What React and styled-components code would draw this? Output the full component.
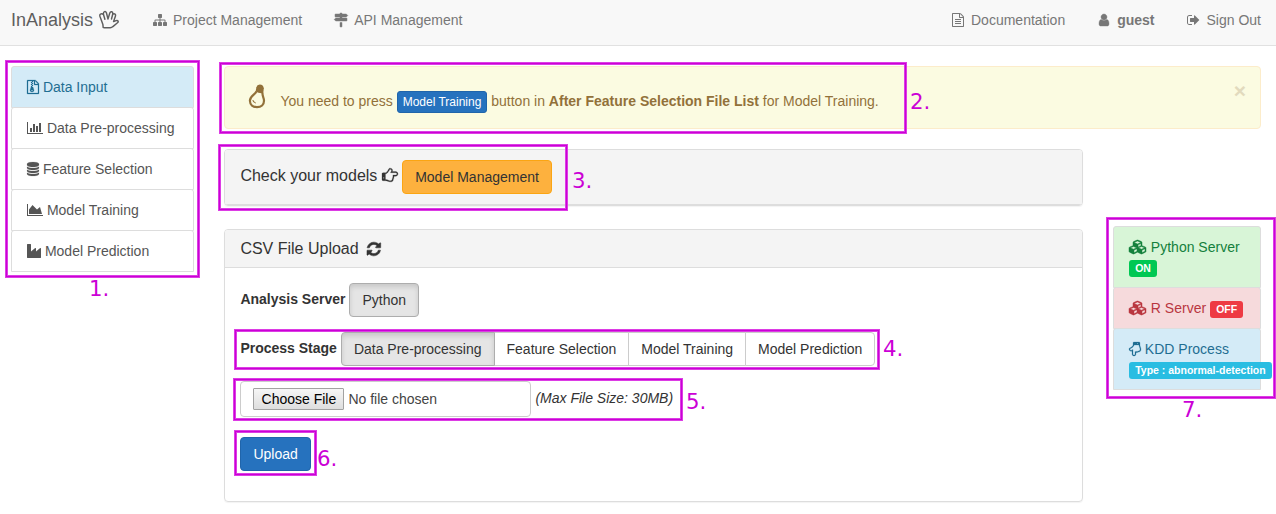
import React from "react";
import styled, { createGlobalStyle, css } from "styled-components";

const GlobalStyle = createGlobalStyle`
  * { box-sizing: border-box; }
  body {
    margin: 0;
    background: #fff;
    color: #333;
    font: 14px/20px "Liberation Sans", Arial, sans-serif;
    overflow: hidden;
  }
  b { font-weight: 700; }
`;

/* ---------- icons ---------- */

const FILE_FRAME =
  "M1468 380q28 28 48 76t20 88v1152q0 40-28 68t-68 28h-1344q-40 0-68-28t-28-68v-1600q0-40 28-68t68-28h896q40 0 88 20t76 48zm-444-244v376h376q-10-29-22-41l-313-313q-12-12-41-22zm384 1528v-1024h-416q-40 0-68-28t-28-68v-416";
const HAND =
  "M256 1216q0-26-19-45t-45-19-45 19-19 45 19 45 45 19 45-19 19-45zM1664 768q0-51-39-89.5t-89-38.5h-576q0-20 15-48.5t33-55 33-68 15-84.5q0-67-44.5-97.5t-115.5-30.5q-24 0-90 139-24 44-37 65-40 64-112 145-71 81-101 106-69 57-140 57h-32v640h32q72 0 167 32t193.5 64 179.5 32q189 0 189-167 0-26-5-56 30-16 47.5-52.5t17.5-73.5-18-69q53-50 53-119 0-25-10-55.5t-25-47.5h331q52 0 90-38t38-90zm128-1q0 105-75.5 181t-180.5 76h-169q-4 62-37 119 3 21 3 43 0 101-60 178 1 139-85 219.5t-227 80.5q-133 0-322-69-164-59-223-59h-288q-53 0-90.5-37.5t-37.5-90.5v-640q0-53 37.5-90.5t90.5-37.5h288q10 0 21.5-4.5t23.5-14 22.5-18 24-22.5 20.5-21.5 19-21.5 14-17q65-74 100-129 13-21 33-62t37-72 40.5-63 55-49.5 69.5-17.5q125 0 206.5 67t81.5 189q0 68-22 128h374q104 0 180 76t76 179z";

const ICONS = {
  sitemap: {
    w: 1792,
    d: "M1792 1248v320q0 40-28 68t-68 28h-320q-40 0-68-28t-28-68v-320q0-40 28-68t68-28h96v-192h-512v192h96q40 0 68 28t28 68v320q0 40-28 68t-68 28h-320q-40 0-68-28t-28-68v-320q0-40 28-68t68-28h96v-192h-512v192h96q40 0 68 28t28 68v320q0 40-28 68t-68 28h-320q-40 0-68-28t-28-68v-320q0-40 28-68t68-28h96v-192q0-52 38-90t90-38h512v-192h-96q-40 0-68-28t-28-68v-320q0-40 28-68t68-28h320q40 0 68 28t28 68v320q0 40-28 68t-68 28h-96v192h512q52 0 90 38t38 90v192h96q40 0 68 28t28 68z",
  },
  signs: {
    w: 1792,
    d: "M1745 297q10 10 10 23t-10 23l-141 141q-28 28-68 28h-1344q-26 0-45-19t-19-45v-256q0-26 19-45t45-19h576v-64q0-26 19-45t45-19h128q26 0 45 19t19 45v64h512q40 0 68 28zm-977 919h256v512q0 26-19 45t-45 19h-128q-26 0-45-19t-19-45v-512zm832-576q26 0 45 19t19 45v256q0 26-19 45t-45 19h-1344q-40 0-68-28l-141-141q-10-10-10-23t10-23l141-141q28-28 68-28h512v-192h256v192h576z",
    weight: 60,
  },
  fileText: {
    w: 1536,
    d:
      FILE_FRAME +
      "h-768v1536h1280zm-1024-864q0-14 9-23t23-9h704q14 0 23 9t9 23v64q0 14-9 23t-23 9h-704q-14 0-23-9t-9-23v-64zm736 224q14 0 23 9t9 23v64q0 14-9 23t-23 9h-704q-14 0-23-9t-9-23v-64q0-14 9-23t23-9h704zm0 256q14 0 23 9t9 23v64q0 14-9 23t-23 9h-704q-14 0-23-9t-9-23v-64q0-14 9-23t23-9h704z",
  },
  fileZip: {
    w: 1536,
    d:
      "M640 384v-128h-128v128h128zm128 128v-128h-128v128h128zm-128 128v-128h-128v128h128zm128 128v-128h-128v128h128z" +
      FILE_FRAME +
      "h-128v128h-128v-128h-512v1536h1280zm-627-721l107 349q8 27 8 52 0 83-72.5 137.5t-183.5 54.5-183.5-54.5-72.5-137.5q0-25 8-52 21-63 120-396v-128h128v128h79q22 0 39 13t23 34zm-141 465q53 0 90.5-19t37.5-45-37.5-45-90.5-19-90.5 19-37.5 45 37.5 45 90.5 19z",
    weight: 30,
  },
  user: {
    x: 256,
    w: 1280,
    d: "M1536 1399q0 109-62.5 187t-150.5 78h-854q-88 0-150.5-78t-62.5-187q0-85 8.5-160.5t31.5-152 58.5-131 94-89 134.5-34.5q131 128 313 128t313-128q76 0 134.5 34.5t94 89 58.5 131 31.5 152 8.5 160.5zm-256-887q0 159-112.5 271.5t-271.5 112.5-271.5-112.5-112.5-271.5 112.5-271.5 271.5-112.5 271.5 112.5 112.5 271.5z",
    weight: 50,
  },
  signOut: {
    x: 64,
    w: 1664,
    d: "M704 1440q0 4 1 20t.5 26.5-3 23.5-10 19.5-20.5 6.5h-320q-119 0-203.5-84.5t-84.5-203.5v-704q0-119 84.5-203.5t203.5-84.5h320q13 0 22.5 9.5t9.5 22.5q0 4 1 20t.5 26.5-3 23.5-10 19.5-20.5 6.5h-320q-66 0-113 47t-47 113v704q0 66 47 113t113 47h312l11.5 1 11.5 3 8 5.5 7 9 2 13.5zm928-544q0 26-19 45l-544 544q-19 19-45 19t-45-19-19-45v-288h-448q-26 0-45-19t-19-45v-384q0-26 19-45t45-19h448v-288q0-26 19-45t45-19 45 19l544 544q19 19 19 45z",
  },
  barChart: {
    w: 2048,
    d: "M640 896v512h-256v-512h256zm384-512v1024h-256v-1024h256zm1024 1152v128h-2048v-1536h128v1408h1920zm-640-896v768h-256v-768h256zm384-384v1152h-256v-1152h256z",
  },
  database: {
    x: 128,
    w: 1536,
    d: "M896 768q237 0 443-43t325-127v170q0 69-103 128t-280 93.5-385 34.5-385-34.5-280-93.5-103-128v-170q119 84 325 127t443 43zm0 768q237 0 443-43t325-127v170q0 69-103 128t-280 93.5-385 34.5-385-34.5-280-93.5-103-128v-170q119 84 325 127t443 43zm0-384q237 0 443-43t325-127v170q0 69-103 128t-280 93.5-385 34.5-385-34.5-280-93.5-103-128v-170q119 84 325 127t443 43zm0-1152q208 0 385 34.5t280 93.5 103 128v128q0 69-103 128t-280 93.5-385 34.5-385-34.5-280-93.5-103-128v-128q0-69 103-128t280-93.5 385-34.5z",
    weight: 20,
  },
  areaChart: {
    w: 2048,
    d: "M2048 1536v128h-2048v-1536h128v1408h1920zm-384-1024l256 896h-1664v-576l448-576 576 576z",
  },
  industry: {
    w: 1792,
    d: "M448 0q26 0 45 19t19 45v891l536-429q17-14 40-14 26 0 45 19t19 45v379l536-429q17-14 40-14 26 0 45 19t19 45v1152q0 26-19 45t-45 19h-1664q-26 0-45-19t-19-45v-1664q0-26 19-45t45-19h384z",
  },
  refresh: {
    x: 128,
    w: 1536,
    d: "M1639 1056q0 5-1 7-64 268-268 434.5t-478 166.5q-146 0-282.5-55t-243.5-157l-129 129q-19 19-45 19t-45-19-19-45v-448q0-26 19-45t45-19h448q26 0 45 19t19 45-19 45l-137 137q71 66 161 102t187 36q134 0 250-65t186-179q11-17 53-117 8-23 30-23h192q13 0 22.5 9.5t9.5 22.5zm25-800v448q0 26-19 45t-45 19h-448q-26 0-45-19t-19-45 19-45l138-138q-148-137-349-137-134 0-250 65t-186 179q-11 17-53 117-8 23-30 23h-199q-13 0-22.5-9.5t-9.5-22.5v-7q65-268 270-434.5t480-166.5q146 0 284 55.5t245 156.5l130-129q19-19 45-19t45 19 19 45z",
    weight: 60,
  },
  cubes: {
    w: 2304,
    d: "M640 1632l384-192v-314l-384 164v342zm-64-454l404-173-404-173-404 173zm1088 454l384-192v-314l-384 164v342zm-64-454l404-173-404-173-404 173zm-448-293l384-165v-266l-384 164v267zm-64-379l441-189-441-189-441 189zm1088 518v416q0 36-19 67t-52 47l-448 224q-25 14-57 14t-57-14l-448-224q-4-2-7-4-2 2-7 4l-448 224q-25 14-57 14t-57-14l-448-224q-33-16-52-47t-19-67v-416q0-38 21.5-70t56.5-48l434-186v-400q0-38 21.5-70t56.5-48l448-192q23-10 50-10t50 10l448 192q35 16 56.5 48t21.5 70v400l434 186q36 16 57 48t21 70z",
    weight: 60,
  },
  handRight: { w: 1792, d: HAND, weight: 30 },
  handDown: { x: 128, w: 1536, d: HAND, transform: "matrix(0 1 1 0 0 0)", weight: 30 },
};

const Glyph = styled.svg`
  height: 1em;
  vertical-align: -0.143em;
  fill: currentColor;
  stroke: currentColor;
  overflow: visible;
`;

const Icon = ({ name }) => {
  const { x = 0, w, d, transform, weight = 0 } = ICONS[name];
  return (
    <Glyph viewBox={`${x} 0 ${w} 1792`} width={`${w / 1792}em`} aria-hidden="true">
      <path d={d} transform={transform} strokeWidth={weight} />
    </Glyph>
  );
};

const SpockSvg = styled.svg`
  flex: none;
  width: 20px;
  height: 20px;
  margin-left: 6px;
  fill: none;
  stroke: currentColor;
  stroke-width: 1.45;
  stroke-linejoin: round;
  stroke-linecap: round;
`;

const SpockHand = () => (
  <SpockSvg viewBox="0 0 20 20">
    <path d="M4.2 17.6L3.9 14.6L1 6.6C.2 4.2 2 3.2 4.4 4.3C4.2 1.2 6.6.7 7.4 2.8L9 9L10.8 3C11.6.9 14.2 1.4 13.7 4.2C15.7 3.2 17 4.4 16.4 6.2L14.6 11.6L17 10.6C19.1 9.9 20 11.8 18.2 13L13.9 16.6C13.1 17.4 12.3 17.8 11.2 17.8H5.4Q4.4 17.8 4.2 17.6Z" />
    <path d="M4.4 4.3L5.9 9.2M13.7 4.2L12.5 9" />
  </SpockSvg>
);

const BulbSvg = styled.svg`
  flex: none;
  width: 20px;
  height: 26px;
  margin-right: 13px;
`;

const Bulb = () => (
  <BulbSvg viewBox="0 0 20 26">
    <path d="M9.4 3.2Q9.9 .6 12.8 .5Q16.4 .8 16.8 4.2L16.3 9Q12.4 9.8 8.6 7.4Z" fill="#92713a" />
    <path
      d="M9.4 7.4C8.4 10.6 2.9 11.4 2.9 16.8C3 20.9 6.2 23.2 10 23.2C14.2 23.2 17 20.6 17 16.8C17 13.4 15.1 12.2 15.5 8.6"
      fill="none"
      stroke="#92713a"
      strokeWidth="2.2"
    />
    <path d="M5.8 16.2Q6.3 18.4 8.8 19" fill="none" stroke="#92713a" strokeWidth="1.1" />
  </BulbSvg>
);

/* ---------- navigation bar ---------- */

const Navbar = styled.nav`
  display: flex;
  align-items: center;
  height: 46px;
  padding: 0 15px 5px 11px;
  background: #f8f8f8;
  border-bottom: 1px solid #e1e1e1;
  color: #777;
`;

const Brand = styled.a`
  display: flex;
  align-items: center;
  width: 140px;
  font-size: 18px;
  color: #5e5e5e;
`;

const NavGroup = styled.div`
  display: flex;
  gap: 30px;
  ${(p) => p.$end && css`margin-left: auto;`}
`;

const NavLink = styled.a`
  display: flex;
  gap: 4px;
  white-space: nowrap;
  font-weight: ${(p) => (p.$bold ? 700 : 400)};
`;

const NavIcon = styled.span`
  width: 18px;
  text-align: center;
`;

/* ---------- page structure ---------- */

const Page = styled.div`
  position: relative;
  width: 1276px;
  height: 514px;
  overflow: hidden;
`;

const Content = styled.div`
  display: flex;
  gap: 30.4px;
  padding: 20px 15px 0 11px;
`;

const Main = styled.main`
  width: 1036.6px;
`;

const Columns = styled.div`
  display: flex;
  align-items: flex-start;
  gap: 29.6px;
`;

const PanelColumn = styled.div`
  width: 859px;
`;

/* ---------- side lists ---------- */

const List = styled.div`
  flex: none;
  width: ${(p) => p.$width}px;
  margin-top: ${(p) => p.$offset || 0}px;
`;

const tones = {
  plain: css`background: #fff; color: #555;`,
  info: css`background: #d4ebf7; color: #1f6e92;`,
  success: css`background: #d8f5d7; color: #14803c;`,
  danger: css`background: #f6dadc; color: #b9363f;`,
};

const ListItem = styled.div`
  padding: 10px 15px;
  margin-bottom: -1px;
  border: 1px solid #ddd;
  border-radius: 3px 3px 0 0;
  white-space: nowrap;
  ${(p) => tones[p.$tone || "plain"]}
`;

const StatusLine = styled.div`
  height: 20px;
`;

const Badge = styled.span`
  display: inline-block;
  height: 17px;
  margin-top: 3px;
  padding: 0 6.2px;
  border-radius: 3px;
  background: ${(p) => p.$color};
  color: #fff;
  font-size: 10.5px;
  font-weight: 700;
  line-height: 17px;
  vertical-align: top;
`;

/* ---------- alert ---------- */

const Alert = styled.div`
  display: flex;
  align-items: flex-start;
  height: 63px;
  margin-bottom: 20px;
  padding: 17px 15px 0 22px;
  background: #fbfbe1;
  border: 1px solid #fcecca;
  border-radius: 4px;
  color: #92713a;
`;

const AlertText = styled.div`
  padding-top: 7px;
  white-space: nowrap;
`;

const CloseMark = styled.span`
  margin: -3px -1px 0 auto;
  font-size: 21px;
  font-weight: 700;
  color: #e2dabd;
`;

/* ---------- buttons ---------- */

const Button = styled.button`
  height: 34px;
  padding: 0 12px;
  border: 1px solid #ccc;
  border-radius: 4px;
  background: #fff;
  color: #333;
  font: inherit;
  white-space: nowrap;
  ${(p) => p.$active && css`
    background: #e5e5e5;
    border-color: #adadad;
    box-shadow: inset 0 3px 5px rgba(0, 0, 0, 0.125);
  `}
  ${(p) => p.$primary && css`
    background: #2672be;
    border-color: #2065ab;
    color: #fff;
  `}
  ${(p) => p.$warning && css`
    background: #fdb13e;
    border-color: #fba512;
  `}
  ${(p) => p.$small && css`
    height: 22px;
    padding: 0 5px;
    border-radius: 3px;
    font-size: 12px;
    line-height: 18px;
    vertical-align: 0;
  `}
`;

const ButtonGroup = styled.div`
  display: flex;
  ${Button} {
    border-radius: 0;
    margin-left: -1px;
  }
  ${Button}:first-child {
    margin-left: 0;
    border-radius: 4px 0 0 4px;
    position: relative;
  }
  ${Button}:last-child {
    border-radius: 0 4px 4px 0;
  }
`;

/* ---------- panels ---------- */

const Panel = styled.section`
  height: ${(p) => p.$height}px;
  margin-bottom: 23px;
  border: 1px solid #ddd;
  border-radius: 4px;
  box-shadow: 0 1px 1px rgba(0, 0, 0, 0.05);
  overflow: hidden;
`;

const PanelHeading = styled.header`
  display: flex;
  align-items: center;
  gap: ${(p) => p.$gap}px;
  height: ${(p) => p.$height}px;
  padding: 0 15px;
  background: #f4f4f4;
  border-bottom: 1px solid #ddd;
  font-size: 16px;
  ${Button} { font-size: 14px; }
`;

const HeadingLabel = styled.span`
  padding-bottom: ${(p) => p.$lift || 0}px;
`;

const PanelBody = styled.div`
  padding: 15px;
`;

const FormRow = styled.div`
  display: flex;
  align-items: center;
  gap: 4px;
  height: ${(p) => p.$height || 34}px;
  margin-bottom: ${(p) => p.$after || 0}px;
`;

const Label = styled.label`
  padding-bottom: 2px;
  font-weight: 700;
`;

const FileField = styled.div`
  display: flex;
  align-items: center;
  gap: 4px;
  width: 291px;
  height: 36px;
  padding-left: 12px;
  border: 1px solid #ccc;
  border-radius: 4px;
  color: #444;
`;

const ChooseButton = styled.button`
  width: 91px;
  height: 22px;
  padding: 0;
  border: 1px solid #a2a2a2;
  border-radius: 1px;
  background: linear-gradient(#f6f6f6, #dedede);
  color: #000;
  font: inherit;
`;

const Hint = styled.em`
  padding-bottom: 2px;
`;

/* ---------- callouts drawn over the page ---------- */

const Frame = styled.div`
  position: absolute;
  left: ${(p) => p.$x + 1}px;
  top: ${(p) => p.$y + 1}px;
  width: ${(p) => p.$w - 2}px;
  height: ${(p) => p.$h - 2}px;
  border: 1px solid #cb00d6;
  box-shadow: 0 0 0 1px #dc3de4, inset 0 0 0 1px #dc3de4;
`;

const Marker = styled.span`
  position: absolute;
  left: ${(p) => p.$x}px;
  top: ${(p) => p.$y}px;
  color: #cb00d6;
  font: 21.3px/24px "DejaVu Sans", sans-serif;
`;

const CALLOUTS = [
  { box: [5, 60, 195, 218], mark: [89, 277] },
  { box: [219, 62, 688, 72], mark: [910, 90] },
  { box: [218, 144, 350, 67], mark: [572, 169] },
  { box: [234, 329, 646, 41], mark: [883, 337] },
  { box: [233, 378, 450, 43], mark: [686, 390] },
  { box: [234, 430, 83, 46], mark: [317, 447] },
  { box: [1106, 217, 170, 182], mark: [1182, 398] },
];

const STEPS = [
  ["fileZip", "Data Input"],
  ["barChart", "Data Pre-processing"],
  ["database", "Feature Selection"],
  ["areaChart", "Model Training"],
  ["industry", "Model Prediction"],
];

const NavEntry = ({ icon, bold, children }) => (
  <NavLink $bold={bold}>
    <NavIcon><Icon name={icon} /></NavIcon>
    {children}
  </NavLink>
);

export default function App() {
  return (
    <Page>
      <GlobalStyle />
      <Navbar>
        <Brand>InAnalysis<SpockHand /></Brand>
        <NavGroup>
          <NavEntry icon="sitemap">Project Management</NavEntry>
          <NavEntry icon="signs">API Management</NavEntry>
        </NavGroup>
        <NavGroup $end>
          <NavEntry icon="fileText">Documentation</NavEntry>
          <NavEntry icon="user" bold>guest</NavEntry>
          <NavEntry icon="signOut">Sign Out</NavEntry>
        </NavGroup>
      </Navbar>

      <Content>
        <List $width={183}>
          {STEPS.map(([icon, label], i) => (
            <ListItem key={label} $tone={i === 0 ? "info" : "plain"}>
              <Icon name={icon} /> {label}
            </ListItem>
          ))}
        </List>

        <Main>
          <Alert>
            <Bulb />
            <AlertText>
              You need to press <Button $primary $small>Model Training</Button> button in{" "}
              <b>After Feature Selection File List</b> for Model Training.
            </AlertText>
            <CloseMark>×</CloseMark>
          </Alert>

          <Columns>
            <PanelColumn>
              <Panel $height={57}>
                <PanelHeading $height={55} $gap={4.4}>
                  <HeadingLabel $lift={3}>Check your models <Icon name="handRight" /></HeadingLabel>
                  <Button $warning>Model Management</Button>
                </PanelHeading>
              </Panel>

              <Panel $height={273}>
                <PanelHeading $height={38} $gap={8}>
                  <HeadingLabel>CSV File Upload</HeadingLabel>
                  <Icon name="refresh" />
                </PanelHeading>
                <PanelBody>
                  <FormRow $after={15}>
                    <Label>Analysis Server</Label>
                    <Button $active>Python</Button>
                  </FormRow>
                  <FormRow $after={15}>
                    <Label>Process Stage</Label>
                    <ButtonGroup>
                      <Button $active>Data Pre-processing</Button>
                      <Button>Feature Selection</Button>
                      <Button>Model Training</Button>
                      <Button>Model Prediction</Button>
                    </ButtonGroup>
                  </FormRow>
                  <FormRow $height={36} $after={20}>
                    <FileField>
                      <ChooseButton>Choose File</ChooseButton>
                      No file chosen
                    </FileField>
                    <Hint>(Max File Size: 30MB)</Hint>
                  </FormRow>
                  <Button $primary>Upload</Button>
                </PanelBody>
              </Panel>
            </PanelColumn>

            <List $width={148} $offset={77}>
              <ListItem $tone="success">
                <StatusLine><Icon name="cubes" /> Python Server</StatusLine>
                <StatusLine><Badge $color="#00c853">ON</Badge></StatusLine>
              </ListItem>
              <ListItem $tone="danger">
                <StatusLine>
                  <Icon name="cubes" /> R Server <Badge $color="#ee3a43">OFF</Badge>
                </StatusLine>
              </ListItem>
              <ListItem $tone="info">
                <StatusLine><Icon name="handDown" /> KDD Process</StatusLine>
                <StatusLine><Badge $color="#29bde2">Type : abnormal-detection</Badge></StatusLine>
              </ListItem>
            </List>
          </Columns>
        </Main>
      </Content>

      {CALLOUTS.map(({ box: [x, y, w, h], mark: [mx, my] }, i) => (
        <React.Fragment key={i}>
          <Frame $x={x} $y={y} $w={w} $h={h} />
          <Marker $x={mx} $y={my}>{i + 1}.</Marker>
        </React.Fragment>
      ))}
    </Page>
  );
}
